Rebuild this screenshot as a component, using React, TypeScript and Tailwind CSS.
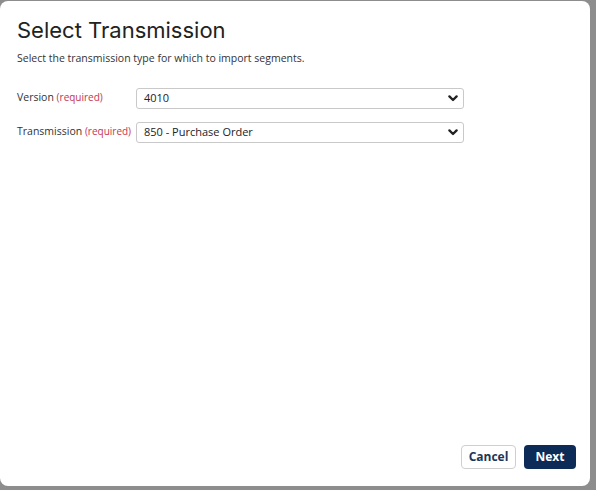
import React from "react";

function Chevron() {
  return (
    <svg width="10" height="7" viewBox="0 0 10 7" className="shrink-0">
      <path d="M1.4 1.4 L5 5 L8.6 1.4" fill="none" stroke="#222" strokeWidth="2.3" strokeLinecap="round" strokeLinejoin="round" />
    </svg>
  );
}

function Field({ label, value }: { label: string; value: string }) {
  return (
    <div className="flex items-center">
      <div className="w-[119px] text-[10.5px] text-[#333]">
        {label} <span className="text-[10px] text-[#c8344f]">(required)</span>
      </div>
      <div className="flex h-[21px] w-[328px] items-center justify-between rounded-[3px] border border-[#c9c9c9] bg-white pl-[7px] pr-[5px] text-[11px] text-[#222]">
        <span>{value}</span>
        <Chevron />
      </div>
    </div>
  );
}

export default function App() {
  return (
    <div
      className="flex h-[490px] w-[596px] bg-[#8d8d8d] pt-[1px] pr-[6px] pb-[4px]"
      style={{ fontFamily: '"Open Sans", "Noto Sans", sans-serif' }}
    >
      <div className="flex flex-1 flex-col rounded-[8px] bg-white pl-[17px] pr-[14px] pb-[17px]">
        <h1
          className="mt-[14px] text-[22px] font-normal leading-[30px] text-[#222]"
          style={{ fontFamily: 'Inter, "Noto Sans", sans-serif' }}
        >
          Select Transmission
        </h1>
        <p className="mt-[6px] text-[10.5px] text-[#333]">
          Select the transmission type for which to import segments.
        </p>
        <div className="mt-[21px] flex flex-col gap-[13px]">
          <Field label="Version" value="4010" />
          <Field label="Transmission" value="850 - Purchase Order" />
        </div>
        <div className="mt-auto flex justify-end gap-[8px]">
          <button className="h-[24px] w-[55px] rounded-[4px] border border-[#cfcfcf] bg-white text-[12px] font-bold text-[#1d3557]">
            Cancel
          </button>
          <button className="h-[24px] w-[52px] rounded-[4px] bg-[#0c2b56] text-[12px] font-bold text-white">
            Next
          </button>
        </div>
      </div>
    </div>
  );
}
